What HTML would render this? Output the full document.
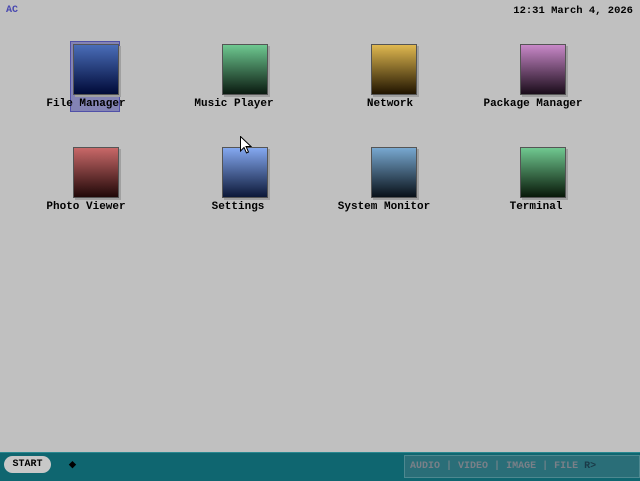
<html><head><style>
body{margin:0;width:640px;height:480px;background:#c0c0c0;position:relative;overflow:hidden;font-family:"Liberation Mono",monospace;font-weight:bold;font-size:11px;color:#000}
.i{position:absolute;width:44px;height:49px;border:1px solid #555;box-shadow:2px 2px 0 #a0a0a0}
.l{position:absolute;width:140px;text-align:center;line-height:12px}
.sel{position:absolute;left:70px;top:41px;width:48px;height:69px;background:rgba(80,80,170,.55);border:1px solid #5050a8}
</style></head><body>
<div style="position:absolute;left:6px;top:5px;color:#4848b0;font-size:10px">AC</div>
<div style="position:absolute;right:7px;top:5px;font-size:10.5px">12:31 March 4, 2026</div>
<div class="sel"></div>
<div class="i" style="left:73px;top:44px;background:linear-gradient(#4a6db8,#000a38)"></div>
<div class="i" style="left:222px;top:44px;background:linear-gradient(#6ec890,#0a1a10)"></div>
<div class="i" style="left:371px;top:44px;background:linear-gradient(#e0b850,#201400)"></div>
<div class="i" style="left:520px;top:44px;background:linear-gradient(#c888c8,#1a0c1a)"></div>
<div class="i" style="left:73px;top:147px;background:linear-gradient(#c86868,#200808)"></div>
<div class="i" style="left:222px;top:147px;background:linear-gradient(#84a8f0,#0c1838)"></div>
<div class="i" style="left:371px;top:147px;background:linear-gradient(#78a8d0,#081018)"></div>
<div class="i" style="left:520px;top:147px;background:linear-gradient(#70c890,#081808)"></div>
<div class="l" style="left:16px;top:98px">File Manager</div>
<div class="l" style="left:164px;top:98px">Music Player</div>
<div class="l" style="left:320px;top:98px">Network</div>
<div class="l" style="left:463px;top:98px">Package Manager</div>
<div class="l" style="left:16px;top:201px">Photo Viewer</div>
<div class="l" style="left:168px;top:201px">Settings</div>
<div class="l" style="left:314px;top:201px">System Monitor</div>
<div class="l" style="left:466px;top:201px">Terminal</div>
<svg style="position:absolute;left:240px;top:136px" width="12" height="18"><path d="M0.5 0.5V15L4 11.5L6.5 17L8.5 16L6 10.5H11Z" fill="#fff" stroke="#000"/></svg>
<div style="position:absolute;left:0;top:452px;width:640px;height:28px;background:#0f6670;border-top:1px solid #2a8890"></div>
<div style="position:absolute;left:4px;top:456px;width:47px;height:17px;background:#c8c8c8;border-radius:9px;font-size:10px;line-height:17px;text-align:center">START</div>
<div style="position:absolute;left:69px;top:460px;font-size:9px">◆</div>
<div style="position:absolute;left:404px;top:455px;width:236px;height:23px;background:#2a6e78;border:1px solid #4d8890;box-sizing:border-box;font-size:10px;line-height:21px;color:#7a8088;padding-left:5px;white-space:pre">AUDIO <span style="color:#6c8088">|</span> VIDEO <span style="color:#6c8088">|</span> IMAGE <span style="color:#6c8088">|</span> FILE <span style="color:#1a3a48">R&gt;</span></div>
</body></html>
